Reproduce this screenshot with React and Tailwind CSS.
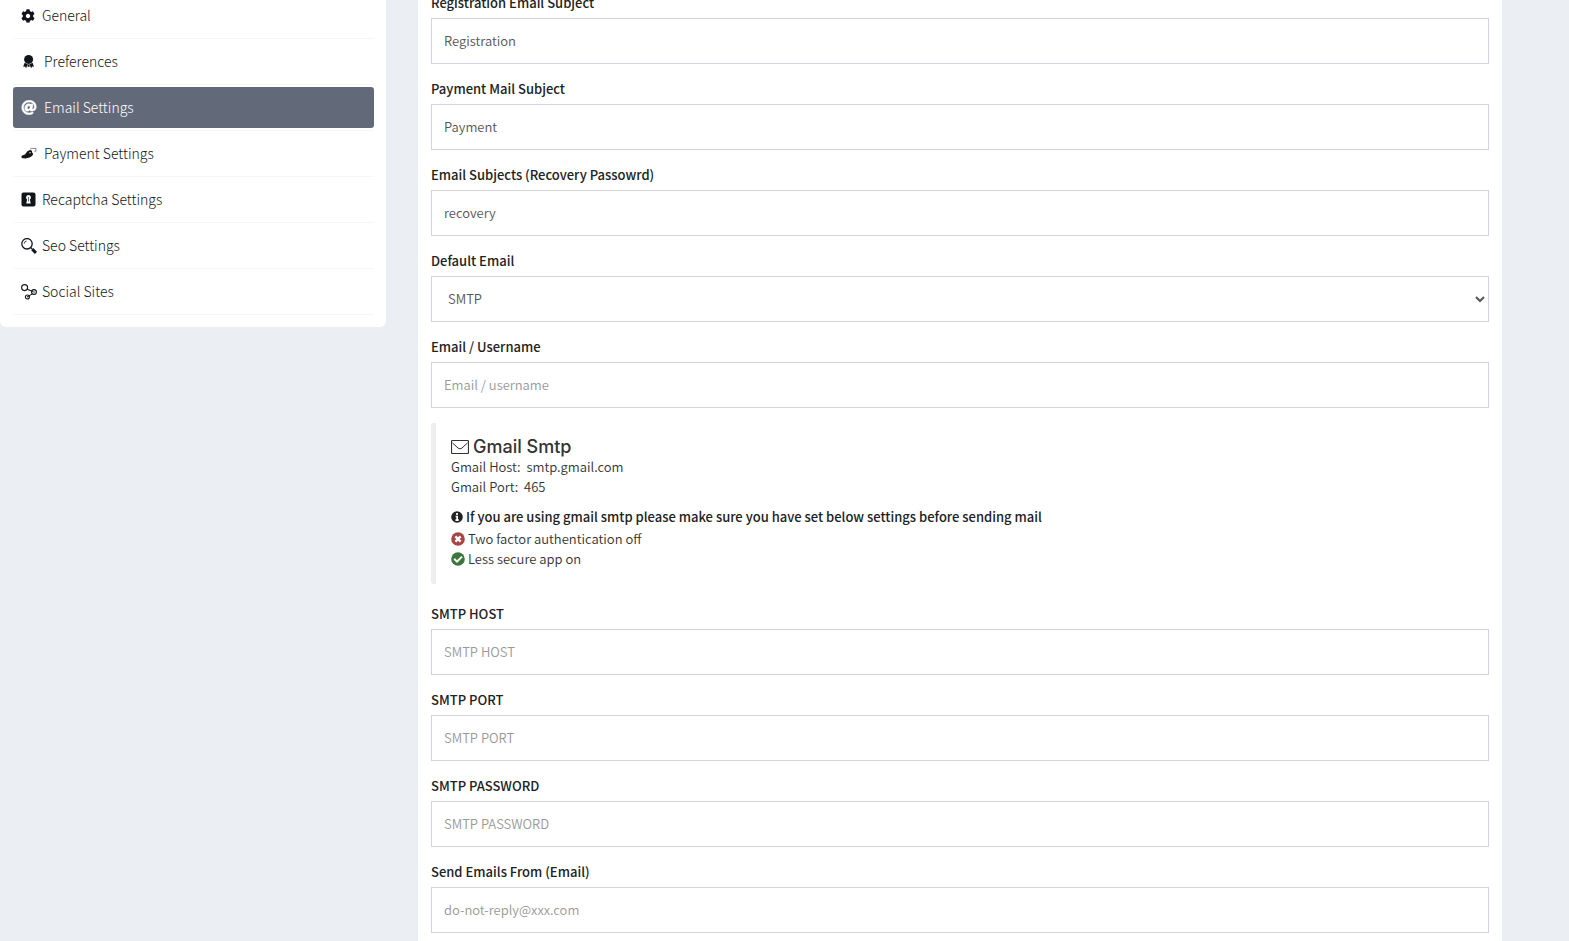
import { FaAt, FaCog } from "react-icons/fa";

function BadgeIcon() {
    return (
        <svg viewBox="0 0 16 16" className="h-4 w-4" fill="currentColor" aria-hidden="true">
            <circle cx="7.6" cy="5.4" r="4.5" />
            <path d="M3.6 8.8 2.2 12.8l1.9-.3 1 1.7 1.7-3.9zM11.6 8.8l1.4 4-1.9-.3-1 1.7-1.7-3.9z" />
            <path d="M6.6 10.4h2v2.4h-2z" />
        </svg>
    );
}

function PayIcon() {
    return (
        <svg viewBox="0 0 16 16" className="h-4 w-4" fill="currentColor" aria-hidden="true">
            <path d="M.6 12V9.800L4 8.400l2.400-3.200L9 4l2 .8.2 2 1 .8-.8 2.200-2.800 1.600L4.200 12.400z" />
            <path d="M9 3.400 10.200 2.400h4.800v2.800h-1.600" fill="none" stroke="currentColor" strokeWidth="1" opacity=".5" />
            <circle cx="9" cy="6.8" r=".7" fill="#fff" />
        </svg>
    );
}

function KeyholeIcon() {
    return (
        <svg viewBox="0 0 16 16" className="h-4 w-4" aria-hidden="true">
            <rect x=".5" y=".5" width="14" height="14" rx="2" fill="currentColor" />
            <path d="M7.5 3a2.4 2.4 0 0 0-1.400 4.400l-.8 4.200h4.400l-.8-4.200A2.400 2.400 0 0 0 7.500 3z" fill="#fff" />
            <path d="M7.500 5v4.500" stroke="currentColor" strokeWidth=".6" />
        </svg>
    );
}

function SearchIcon() {
    return (
        <svg viewBox="0 0 16 16" className="h-4 w-4" fill="none" stroke="currentColor" aria-hidden="true">
            <circle cx="6" cy="5.8" r="5.2" strokeWidth="1.3" />
            <path d="M3.2 5.6A2.8 2.8 0 0 1 5.6 3" strokeWidth=".8" />
            <path d="m9.8 9.6 1.4 1.4" strokeWidth="1.2" />
            <path d="m11.2 11.2 3.8 3.6" strokeWidth="3" />
        </svg>
    );
}

function ShareIcon() {
    return (
        <svg viewBox="0 0 16 16" className="h-4 w-4" fill="none" stroke="currentColor" strokeWidth="1.1" aria-hidden="true">
            <circle cx="3.6" cy="3.6" r="3" />
            <circle cx="13" cy="8" r="2.4" />
            <circle cx="6.4" cy="13" r="2" />
            <path d="m6.2 5.2 5.6 2.4M6.8 12.6l4.8-3M12.2 8h1.6M6 13l1.4-.6" />
        </svg>
    );
}

function MailIcon() {
    return (
        <svg viewBox="0 0 18 16" className="h-4 w-[18px]" fill="none" stroke="currentColor" aria-hidden="true">
            <rect x=".5" y="1.5" width="17" height="13" rx="1" strokeWidth="1.2" />
            <path d="M1.5 4 7 9c1.3 1 2.7 1 4 0l5.5-5" />
        </svg>
    );
}

function RoundIcon({ className, children }) {
    return (
        <svg viewBox="0 0 14 14" className={className} fill="none" stroke="#fff" aria-hidden="true">
            <circle cx="7" cy="7" r="6.8" fill="currentColor" stroke="none" />
            {children}
        </svg>
    );
}

const MENU = [
    { label: "General", icon: <FaCog className="h-[14px] w-[14px]" />, gap: "gap-[7px]" },
    { label: "Preferences", icon: <BadgeIcon />, gap: "gap-[7px]" },
    { label: "Email Settings", icon: <FaAt className="h-[15px] w-4" stroke="currentColor" strokeWidth="16" />, gap: "gap-[7px]", active: true },
    { label: "Payment Settings", icon: <PayIcon />, gap: "gap-[7px]" },
    { label: "Recaptcha Settings", icon: <KeyholeIcon />, gap: "gap-[5px]" },
    { label: "Seo Settings", icon: <SearchIcon />, gap: "gap-[5px]" },
    { label: "Social Sites", icon: <ShareIcon />, gap: "gap-[5px]" },
];

const CONTROL = "block h-[46px] w-full border border-[#d1d3e0] bg-white pb-[2px] text-[13px] font-[350] text-[#555] outline-none";

function Field({ id, label, children }) {
    return (
        <div className="mb-[15px]">
            <label htmlFor={id} className="mb-[5px] block text-[13px] leading-5 font-medium text-[#222]">
                {label}
            </label>
            {children}
        </div>
    );
}

function TextField({ id, label, type = "text", value, placeholder }) {
    return (
        <Field id={id} label={label}>
            <input
                id={id}
                type={type}
                defaultValue={value}
                placeholder={placeholder}
                className={`${CONTROL} px-3 placeholder:text-[#999]`}
            />
        </Field>
    );
}

function Sidebar() {
    return (
        <nav className="w-full shrink-0 self-start overflow-hidden rounded-b-md bg-white pr-3 pb-3 pl-[13px] lg:w-[386px]">
            <ul className="-mt-[7px]">
                {MENU.map((item) => (
                    <li key={item.label} className="border-b border-[#f6f6f6] py-[2px]">
                        <a
                            href="#"
                            className={`flex h-[41px] items-center rounded-[3px] pl-2 text-[14px] font-light ${item.gap} ${
                                item.active ? "bg-[#626a79] text-white" : "text-[#111519]"
                            }`}
                        >
                            {item.icon}
                            {item.label}
                        </a>
                    </li>
                ))}
            </ul>
        </nav>
    );
}

function GmailNote() {
    return (
        <section className="mb-5 rounded-[3px] border-l-[5px] border-[#eee] pt-[14px] pb-[15px] pl-[15px] text-[13px] leading-5 font-[350] text-[#333]">
            <h4 className="flex items-center gap-1 font-[Inter,sans-serif] text-[18px] leading-5 font-medium">
                <MailIcon />
                Gmail Smtp
            </h4>
            <p className="whitespace-pre-wrap">Gmail Host:  smtp.gmail.com</p>
            <p className="whitespace-pre-wrap">Gmail Port:  465</p>
            <p className="mt-[10px] flex items-center gap-[3px] pb-[2px] font-medium text-[#222]">
                <RoundIcon className="h-3 w-3">
                    <path d="M7 2.4v2.2M5.4 6.4H7.2v4M5.2 10.6h3.8" strokeWidth="2" />
                </RoundIcon>
                If you are using gmail smtp please make sure you have set below settings before sending mail
            </p>
            <p className="flex items-center gap-[3px]">
                <RoundIcon className="h-[14px] w-[14px] text-[#a94442]">
                    <path d="m4.4 4.4 5.2 5.2M9.6 4.4 4.4 9.6" strokeWidth="2.4" />
                </RoundIcon>
                Two factor authentication off
            </p>
            <p className="flex items-center gap-[3px]">
                <RoundIcon className="h-[14px] w-[14px] text-[#3c763d]">
                    <path d="m3.2 6.8 2.8 2.8 5-5" strokeWidth="2" />
                </RoundIcon>
                Less secure app on
            </p>
        </section>
    );
}

export default function App() {
    return (
        <div className="flex min-h-screen flex-col gap-8 overflow-hidden bg-[#ebeef3] font-['Noto_Sans_CJK_JP',sans-serif] lg:flex-row lg:pr-[67px]">
            <Sidebar />
            <main className="min-w-0 flex-1 bg-white px-[13px]">
                <form className="-mt-[7px]">
                    <TextField id="registration" label="Registration Email Subject" value="Registration" />
                    <TextField id="payment" label="Payment Mail Subject" value="Payment" />
                    <TextField id="recovery" label="Email Subjects (Recovery Passowrd)" value="recovery" />
                    <Field id="mailer" label="Default Email">
                        <select id="mailer" className={`${CONTROL} px-3`}>
                            <option>SMTP</option>
                        </select>
                    </Field>
                    <TextField id="username" label="Email / Username" placeholder="Email / username" />
                    <GmailNote />
                    <TextField id="host" label="SMTP HOST" placeholder="SMTP HOST" />
                    <TextField id="port" label="SMTP PORT" placeholder="SMTP PORT" />
                    <TextField id="password" label="SMTP PASSWORD" type="password" placeholder="SMTP PASSWORD" />
                    <TextField id="from" label="Send Emails From (Email)" type="email" placeholder="do-not-reply@xxx.com" />
                </form>
            </main>
        </div>
    );
}
